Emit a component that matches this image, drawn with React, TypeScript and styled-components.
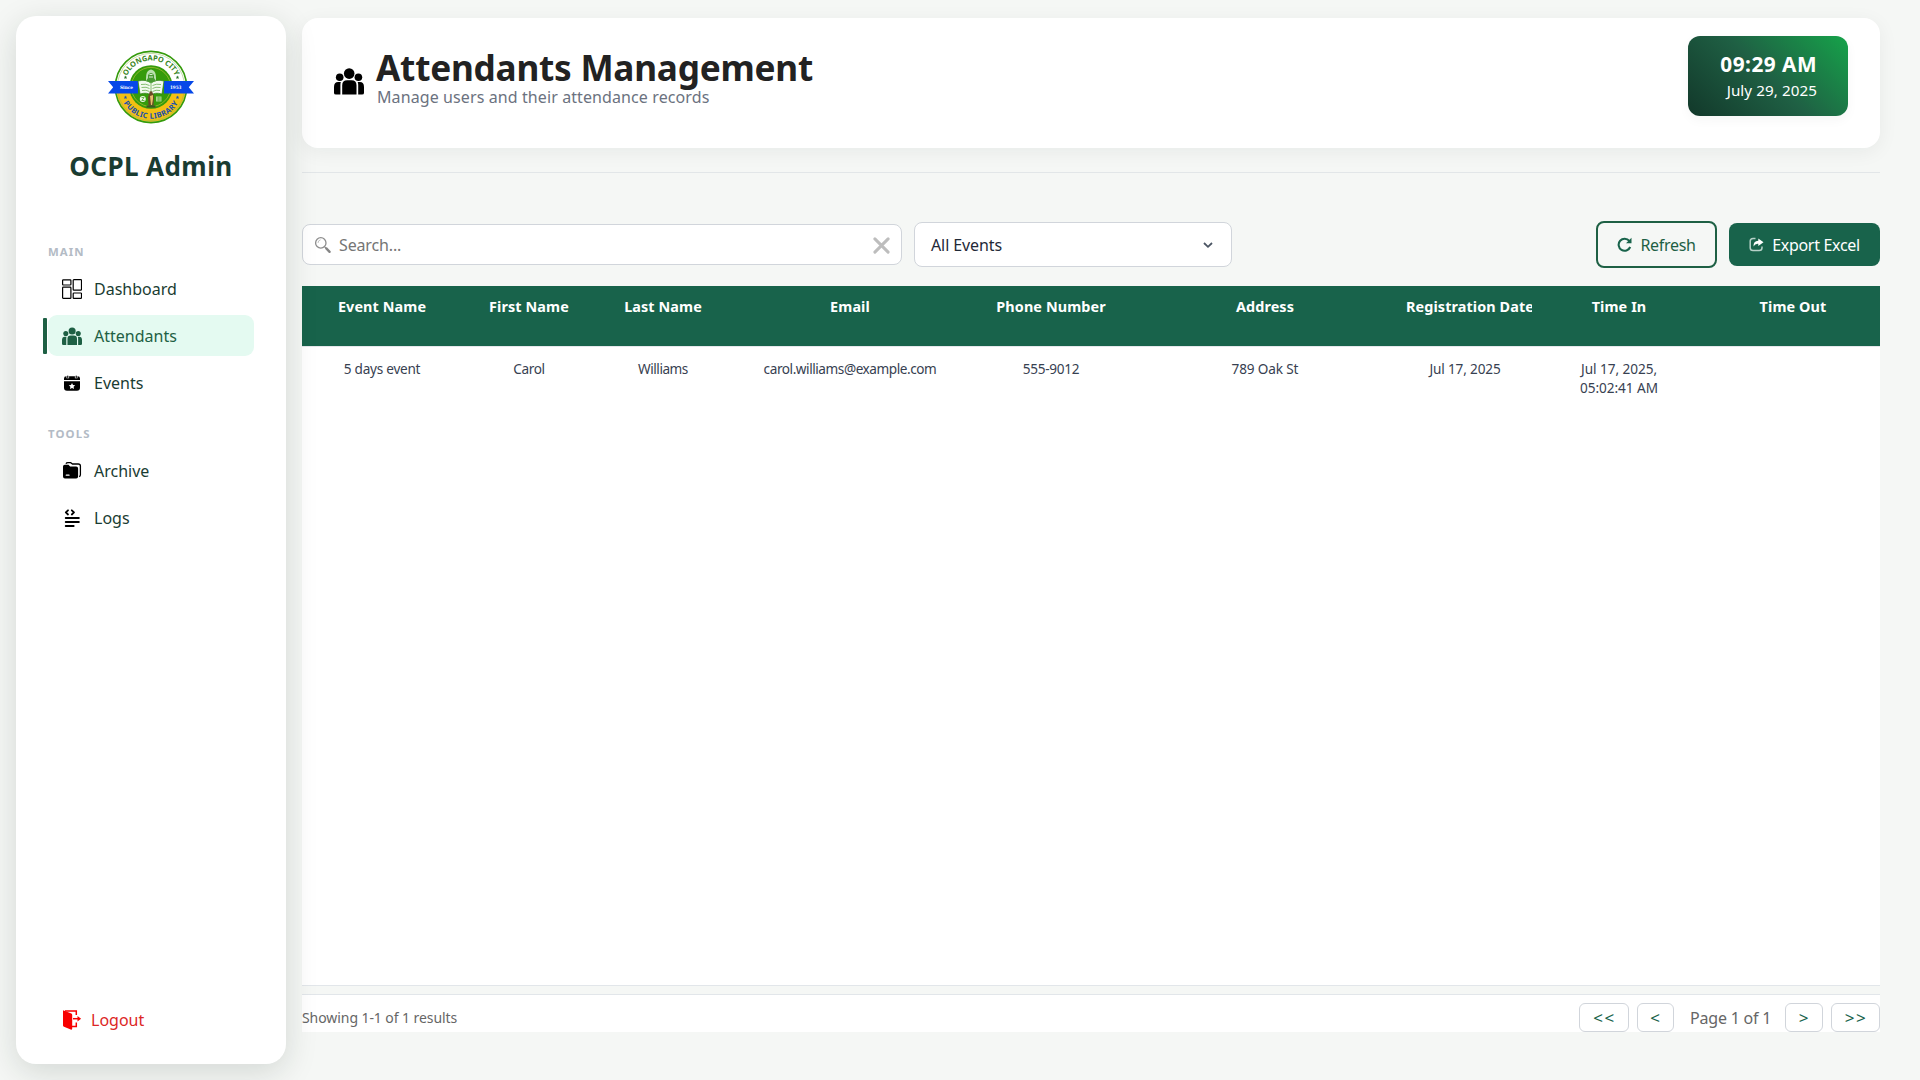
import React from "react";
import styled, { createGlobalStyle } from "styled-components";

const GlobalStyle = createGlobalStyle`
  *, *::before, *::after { box-sizing: border-box; }
  body {
    margin: 0;
    background: #f5f7f5;
    font-family: "Noto Sans", "DejaVu Sans", sans-serif;
    color: #1a3c32;
    overflow: hidden;
  }
  button, input { font-family: inherit; }
`;

const Page = styled.div`
  display: flex;
  gap: 16px;
  height: 1080px;
  padding: 16px 40px 16px 16px;
`;

const Sidebar = styled.aside`
  position: relative;
  z-index: 1;
  display: flex;
  flex-direction: column;
  flex: none;
  width: 270px;
  height: 1048px;
  padding: 34px 32px 27px;
  border-radius: 20px;
  background: #fff;
  box-shadow: 0 8px 32px rgba(20, 40, 30, 0.15);
`;

const Brand = styled.div`
  display: flex;
  flex-direction: column;
  align-items: center;
  height: 184px;
`;

const BrandName = styled.h1`
  margin: 24px 0 0;
  font-size: 26px;
  line-height: 36px;
  font-weight: 700;
  letter-spacing: 0.42px;
  color: #1a3c32;
`;

const SectionLabel = styled.div<{ $gap?: number }>`
  margin-top: ${(p) => p.$gap ?? 0}px;
  height: 34px;
  font-size: 11.4px;
  line-height: 36px;
  font-weight: 700;
  letter-spacing: 1.1px;
  color: #b3bbc5;
`;

const NavItem = styled.a<{ $active?: boolean }>`
  display: flex;
  align-items: center;
  gap: 12px;
  height: 41px;
  margin-bottom: 6px;
  padding-left: 14px;
  border-radius: 9px;
  font-size: 16px;
  color: ${(p) => (p.$active ? "#1e6044" : "#1a3c32")};
  background: ${(p) => (p.$active ? "#e4faf1" : "transparent")};
  position: relative;
  svg { flex: none; }
  &::before {
    content: "";
    display: ${(p) => (p.$active ? "block" : "none")};
    position: absolute;
    left: -5px;
    top: 3px;
    width: 4px;
    height: 36px;
    border-radius: 1px;
    background: #1e6044;
  }
`;

const Logout = styled.a`
  display: flex;
  align-items: center;
  gap: 9px;
  margin-top: auto;
  height: 34px;
  padding-left: 14px;
  font-size: 16px;
  color: #dc2626;
`;

const Main = styled.main`
  flex: 1;
  min-width: 0;
  display: flex;
  flex-direction: column;
  padding-top: 2px;
`;

const Header = styled.header`
  display: flex;
  align-items: flex-start;
  height: 130px;
  padding: 18px 32px;
  border-radius: 16px;
  background: #fff;
  box-shadow: 0 4px 20px rgba(20, 40, 30, 0.06);
`;

const HeaderIcon = styled.div`
  display: flex;
  margin: 30px 12px 0 0;
`;

const Heading = styled.div`
  flex: 1;
  padding-top: 11px;
`;

const Title = styled.h2`
  margin: 0;
  font-size: 35.2px;
  line-height: 40px;
  font-weight: 700;
  letter-spacing: -0.24px;
  color: #222;
`;

const Subtitle = styled.p`
  margin: 0;
  padding-left: 1px;
  font-size: 16px;
  line-height: 20px;
  letter-spacing: 0.1px;
  color: #6b7280;
`;

const Clock = styled.div`
  width: 160px;
  height: 80px;
  padding: 14px 31px 0 0;
  border-radius: 12px;
  text-align: right;
  color: #fff;
  background: linear-gradient(45deg, #12382a 0%, #1f6044 50%, #16a34a 100%);
  box-shadow: 0 4px 12px rgba(20, 40, 30, 0.04);
`;

const Time = styled.div`
  font-size: 20.8px;
  line-height: 28px;
  font-weight: 700;
  letter-spacing: 0.48px;
`;

const DateText = styled.div`
  font-size: 15.2px;
  line-height: 24px;
  letter-spacing: 0.08px;
`;

const Divider = styled.hr`
  width: 100%;
  margin: 24px 0 48px;
  border: 0;
  border-top: 1px solid #e2e6e8;
`;

const Toolbar = styled.div`
  display: flex;
  align-items: center;
  gap: 12px;
  height: 47px;
`;

const SearchBox = styled.label`
  display: flex;
  align-items: center;
  width: 600px;
  height: 41px;
  padding: 0 11px;
  border: 1px solid #d1d5db;
  border-radius: 8px;
  background: #fff;
`;

const SearchInput = styled.input`
  flex: 1;
  min-width: 0;
  margin-left: 7px;
  padding: 0;
  border: 0;
  outline: 0;
  background: none;
  font-size: 16px;
  letter-spacing: -0.14px;
  color: #1f2937;
  &::placeholder { color: #757575; opacity: 1; }
`;

const ClearButton = styled.span`
  display: flex;
  padding-top: 2px;
`;

const Select = styled.div`
  display: flex;
  align-items: center;
  justify-content: space-between;
  width: 318px;
  height: 45px;
  margin-right: auto;
  padding: 0 17px 0 16px;
  border: 1px solid #d1d5db;
  border-radius: 8px;
  background: #fff;
  font-size: 16px;
  letter-spacing: -0.1px;
  color: #1f2937;
`;

const Button = styled.button<{ $solid?: boolean }>`
  display: flex;
  align-items: center;
  justify-content: center;
  gap: 8px;
  width: ${(p) => (p.$solid ? 151 : 121)}px;
  height: ${(p) => (p.$solid ? 43 : 47)}px;
  padding: 0;
  border: ${(p) => (p.$solid ? "0" : "2px solid #1e6044")};
  border-radius: 8px;
  background: ${(p) => (p.$solid ? "#18634b" : "transparent")};
  color: ${(p) => (p.$solid ? "#fff" : "#1e6044")};
  font-size: 16px;
  letter-spacing: -0.3px;
`;

const columns = "160px 134px 134px 240px 162px 266px 134px 174px 174px";

const Table = styled.section`
  height: 700px;
  margin-top: 18px;
  border-bottom: 1px solid #e2e6ea;
  background: #fff;
`;

const HeadRow = styled.div`
  display: grid;
  grid-template-columns: ${columns};
  height: 61px;
  border-bottom: 1px solid #e5e7eb;
  background: #18634b;
  background-clip: padding-box;
`;

const HeadCell = styled.div`
  overflow: hidden;
  padding: 11px 8px 0;
  white-space: nowrap;
  text-align: center;
  color: #fff;
  font-size: 14.4px;
  line-height: 20px;
  font-weight: 700;
  letter-spacing: 0.1px;
`;

const Row = styled.div`
  display: grid;
  grid-template-columns: ${columns};
  padding-top: 12px;
`;

const Cell = styled.div<{ $track: number }>`
  text-align: center;
  white-space: pre-line;
  font-size: 13.6px;
  line-height: 19.4px;
  letter-spacing: ${(p) => p.$track}px;
  color: #374151;
`;

const Footer = styled.footer`
  display: flex;
  align-items: flex-end;
  height: 38px;
  margin-top: 8px;
  border-top: 1px solid #e2e6ea;
  background: #fff;
`;

const Summary = styled.span`
  margin-right: auto;
  font-size: 14px;
  line-height: 29px;
  letter-spacing: -0.07px;
  color: #666;
`;

const PageButton = styled.button<{ $w: number }>`
  width: ${(p) => p.$w}px;
  height: 29px;
  margin-left: 8px;
  padding: 0;
  border: 1px solid #d1d5db;
  border-radius: 6px;
  background: #fff;
  font-size: 17px;
  letter-spacing: 1.6px;
  text-indent: 1px;
  line-height: 28px;
  color: #18634b;
`;

const PageText = styled.span`
  margin: 0 7px 0 16px;
  width: 80px;
  font-size: 16px;
  line-height: 28px;
  letter-spacing: -0.2px;
  white-space: nowrap;
  color: #666;
`;

const Logo = () => (
  <svg width="86" height="74" viewBox="0 0 86 74">
    <defs>
      <path id="arcTop" d="M17.400 43.800a26.500 26.500 0 1 1 51.200 0" />
      <path id="arcBottom" d="M12.500 28.800a31.600 31.600 0 1 0 61 0" />
      <clipPath id="lower"><rect x="0" y="40" width="86" height="34" /></clipPath>
    </defs>
    <circle cx="43" cy="37" r="35.6" fill="#fff" />
    <circle cx="43" cy="37" r="35" fill="#f3c013" clipPath="url(#lower)" />
    <circle cx="43" cy="37" r="35.6" fill="none" stroke="#359b0b" strokeWidth="1.6" />
    <circle cx="43" cy="37" r="33.6" fill="none" stroke="#8fb653" strokeWidth=".5" />
    <circle cx="43" cy="37" r="21.8" fill="#359b0b" />
    <circle cx="43" cy="37" r="19.6" fill="none" stroke="#c4c93d" strokeWidth=".6" />
    <text fontSize="7.400" fontWeight="700" fill="#38851d" textAnchor="middle" letterSpacing="-.05">
      <textPath href="#arcTop" startOffset="50%">OLONGAPO CITY</textPath>
    </text>
    <text fontSize="7.500" fontWeight="700" fill="#174fae" textAnchor="middle" letterSpacing=".35">
      <textPath href="#arcBottom" startOffset="50%">PUBLIC LIBRARY</textPath>
    </text>
    <path d="m0 31 30-.1V43.500H0l5.200-6.300zM86 31l-30-.1V43.500h30l-5.200-6.300z" fill="#0648e8" />
    <path d="m17.500 25.500.5 1.200 1.300.1-1 .8.400 1.300-1.200-.7-1.200.7.400-1.300-1-.8 1.300-.1zM69.500 25.500l.5 1.200 1.300.1-1 .8.400 1.300-1.200-.7-1.200.7.400-1.300-1-.8 1.300-.1z" fill="#227024" />
    <path d="m17.500 45.500.5 1.200 1.300.1-1 .8.400 1.300-1.200-.7-1.200.7.400-1.300-1-.8 1.300-.1zM69.500 45.500l.5 1.200 1.300.1-1 .8.400 1.300-1.200-.7-1.200.7.400-1.300-1-.8 1.300-.1z" fill="#174fae" />
    <text x="12" y="39" fontSize="4.600" fontWeight="700" fill="#fff" fontFamily="DejaVu Serif" textLength="13" lengthAdjust="spacingAndGlyphs">Since</text>
    <text x="62" y="39" fontSize="4.600" fontWeight="700" fill="#fff" fontFamily="DejaVu Serif" textLength="11.500" lengthAdjust="spacingAndGlyphs">1953</text>
    <path d="M30 31q8-2 13 2 5-4 13-2l-2 13q-7-2-11 1-4-3-11-1z" fill="#f2faee" stroke="#2b7d12" strokeWidth=".7" />
    <path d="M43 33v11M33 34.500q5-1 8.500 1M33.500 37.500q5-1 8 1M34 40.500q4-1 7.500 1M53 34.500q-5-1-8.500 1M52.500 37.500q-5-1-8 1M52 40.500q-4-1-7.500 1" fill="none" stroke="#69ad52" strokeWidth=".8" />
    <path d="M38 31c0-5 0-8 2-10q3-3 6 0c2 2 2 5 2 10l-5 2z" fill="#b9dfae" />
    <path d="M40 25q3-4 6 0v3l2 3-5 2-5-2 2-3z" fill="#479a31" />
    <path d="M41.500 24.500h3M41 27h4" stroke="#e7f5e2" strokeWidth=".9" />
    <circle cx="34.800" cy="49" r="3" fill="#eff7e8" />
    <path d="M33.500 47.500h2.600l-2.300 3h2.700" fill="none" stroke="#359b0b" strokeWidth=".7" />
    <path d="M48 46.500h5.500v5H48z" fill="#a9d58f" />
    <path d="M49 48h4M49 50h4M50.800 46.500v5" stroke="#4ca52b" strokeWidth=".5" />
    <path d="M41.500 42.500q1.500-3 3 0l1.500 4-.5 9h-5l-.5-8z" fill="#6a4a25" />
    <path d="m42 46 3-1v4l-1 6h-1z" fill="#e8bd6b" />
    <path d="M38.500 55.500h9v2h-9z" fill="#415427" />
  </svg>
);

const People = ({ size, color = "#000" }: { size: number; color?: string }) => (
  <svg width={size} height={size} viewBox="0 0 30 30" fill={color}>
    <circle cx="15.200" cy="7.600" r="5.300" />
    <circle cx="5.700" cy="11.300" r="3.800" />
    <circle cx="24.400" cy="11.300" r="3.800" />
    <path d="M8.200 28.500v-9.200q0-5 5-5h4.300q5 0 5 5v9.200zM0 28.500v-7.400q0-5 4.200-5h2.600q-.4 1.400-.4 3.200v9.200H2q-2 0-2-1.600zM24.200 28.500v-9.200q0-1.800-.5-3.200h2.200q4.100 0 4.100 5v5.800q0 1.600-2 1.600z" />
  </svg>
);

const DashboardIcon = () => (
  <svg width="20" height="20" viewBox="0 0 20 20" fill="none" stroke="#000" strokeWidth="1.200">
    <rect x=".6" y=".8" width="8.300" height="5.200" rx=".7" />
    <rect x=".6" y="8.200" width="8.300" height="11.200" rx=".7" />
    <rect x="11.200" y=".6" width="8.300" height="10.500" rx=".7" />
    <rect x="11.200" y="14" width="8.300" height="5.400" rx=".7" />
  </svg>
);

const EventsIcon = () => (
  <svg width="20" height="20" viewBox="0 0 20 20">
    <path d="M2 7V5.500q0-2.200 2.300-2.200h11.400Q18 3.300 18 5.500V7zM2 8.200h16v6.600q0 3-3 3H5q-3 0-3-3z" fill="#000" />
    <path d="M5.800 2v3.200M14.200 2v3.200" stroke="#fff" strokeWidth="2.600" />
    <path d="M5.800 3v1.500M14.200 3v1.500" stroke="#000" strokeWidth="1.200" strokeLinecap="round" />
    <path d="m10 10 1 1.900 2.200.3-1.600 1.500.4 2.200-2-1-2 1 .4-2.200-1.600-1.500 2.200-.3z" fill="#fff" />
  </svg>
);

const ArchiveIcon = () => (
  <svg width="20" height="20" viewBox="0 0 20 20">
    <path d="M4 2.700q.4-1 2-1h2.700L10.500 3h5.700q2.200 0 2.200 2v8.700q0 1.300-1.200 2" fill="none" stroke="#000" strokeWidth="1.300" />
    <path d="M1 5.600q0-1.800 1.800-1.800h3.700l1.600 1.800h6q2 0 2 2v7.900q0 1.900-2 1.900H3q-2 0-2-2z" fill="#000" />
    <path d="M4.300 14.200h2.700" stroke="#fff" strokeWidth="1.300" strokeLinecap="round" />
  </svg>
);

const LogsIcon = () => (
  <svg width="20" height="20" viewBox="0 0 20 20" fill="none" stroke="#000" strokeWidth="1.800" strokeLinecap="round" strokeLinejoin="round">
    <path d="M6 2.300 3.800 4.400 6 6.500M9.800 2.300 12 4.400 9.800 6.500M3.700 10h13.200M3.700 14h13.200M3.700 18h8" />
  </svg>
);

const LogoutIcon = () => (
  <svg width="20" height="20" viewBox="0 0 20 20" fill="none" stroke="#f80000" strokeWidth="1.500">
    <path d="M3 .9h11.300v4.200M14.300 12.500v4H9.500" />
    <path d="M11 8.700h6" />
    <path d="m15.500 6 3.600 2.700-3.600 2.700z" fill="#f80000" stroke="none" />
    <path d="M1 .8q0-.6.700-.4L9.300 3.500q.9.400.9 1.400v13.700q0 1.500-1.500.9L2 16.800q-1-.4-1-1.400z" fill="#f80000" stroke="none" />
  </svg>
);

const SearchIcon = () => (
  <svg width="18" height="18" viewBox="0 0 18 18" fill="none">
    <circle cx="6.800" cy="6.900" r="5.200" stroke="#8d8d8d" strokeWidth="1.300" />
    <path d="M4 7q0-2.500 2.500-3.200" stroke="#c2c2c2" />
    <path d="m10.700 10.800 1.500 1.500" stroke="#8d8d8d" strokeWidth="1.200" />
    <path d="m12.300 12.400 3.300 3.400" stroke="#858585" strokeWidth="2.400" strokeLinecap="round" />
  </svg>
);

const ClearIcon = () => (
  <svg width="17" height="17" viewBox="0 0 17 17">
    <path d="m1.900 1.900 13.200 13.200M15.100 1.900 1.900 15.100" stroke="#bdbdbd" strokeWidth="3" strokeLinecap="round" />
  </svg>
);

const ChevronIcon = () => (
  <svg width="12" height="8" viewBox="0 0 12 8">
    <path d="m2 2 4 3.800L10 2" fill="none" stroke="#4b5563" strokeWidth="1.800" />
  </svg>
);

const RefreshIcon = () => (
  <svg width="15" height="15" viewBox="0 0 15 15">
    <path d="M12.300 3.900A6 6 0 1 0 13.200 10" fill="none" stroke="#18634b" strokeWidth="2.100" />
    <path d="M14.500.8v5.500H9z" fill="#18634b" />
  </svg>
);

const ExportIcon = () => (
  <svg width="15" height="15" viewBox="0 0 15 15">
    <path d="M6.500 1.400H4q-2.800 0-2.800 2.800v6.600q0 2.800 2.800 2.800h6.200q2.800 0 2.800-2.800V9.500" fill="none" stroke="#b7d1c8" strokeWidth="1.500" />
    <path d="M9.300 1.500 14.500 5.300 9.300 9.100V6.800Q6 6.500 4.500 9.500 4.300 3.900 9.300 3.700z" fill="#fff" />
  </svg>
);

const headings = [
  "Event Name", "First Name", "Last Name", "Email", "Phone Number",
  "Address", "Registration Date", "Time In", "Time Out",
];

const record: { text: string; track: number }[] = [
  { text: "5 days event", track: -0.25 },
  { text: "Carol", track: -0.4 },
  { text: "Williams", track: -0.47 },
  { text: "carol.williams@example.com", track: -0.44 },
  { text: "555-9012", track: -0.26 },
  { text: "789 Oak St", track: -0.15 },
  { text: "Jul 17, 2025", track: -0.15 },
  { text: "Jul 17, 2025,\n05:02:41 AM", track: -0.05 },
  { text: "", track: 0 },
];

export default function App() {
  return (
    <>
      <GlobalStyle />
      <Page>
        <Sidebar>
          <Brand>
            <Logo />
            <BrandName>OCPL Admin</BrandName>
          </Brand>
          <SectionLabel>MAIN</SectionLabel>
          <NavItem><DashboardIcon />Dashboard</NavItem>
          <NavItem $active><People size={20} color="#1e6044" />Attendants</NavItem>
          <NavItem><EventsIcon />Events</NavItem>
          <SectionLabel $gap={7}>TOOLS</SectionLabel>
          <NavItem><ArchiveIcon />Archive</NavItem>
          <NavItem><LogsIcon />Logs</NavItem>
          <Logout><LogoutIcon />Logout</Logout>
        </Sidebar>
        <Main>
          <Header>
            <HeaderIcon><People size={30} /></HeaderIcon>
            <Heading>
              <Title>Attendants Management</Title>
              <Subtitle>Manage users and their attendance records</Subtitle>
            </Heading>
            <Clock>
              <Time>09:29 AM</Time>
              <DateText>July 29, 2025</DateText>
            </Clock>
          </Header>
          <Divider />
          <Toolbar>
            <SearchBox>
              <SearchIcon />
              <SearchInput placeholder="Search..." />
              <ClearButton><ClearIcon /></ClearButton>
            </SearchBox>
            <Select>All Events<ChevronIcon /></Select>
            <Button><RefreshIcon />Refresh</Button>
            <Button $solid><ExportIcon />Export Excel</Button>
          </Toolbar>
          <Table>
            <HeadRow>
              {headings.map((h) => <HeadCell key={h}>{h}</HeadCell>)}
            </HeadRow>
            <Row>
              {record.map((c, i) => <Cell key={i} $track={c.track}>{c.text}</Cell>)}
            </Row>
          </Table>
          <Footer>
            <Summary>Showing 1-1 of 1 results</Summary>
            <PageButton $w={50}>&lt;&lt;</PageButton>
            <PageButton $w={37}>&lt;</PageButton>
            <PageText>Page 1 of 1</PageText>
            <PageButton $w={38}>&gt;</PageButton>
            <PageButton $w={49}>&gt;&gt;</PageButton>
          </Footer>
        </Main>
      </Page>
    </>
  );
}
